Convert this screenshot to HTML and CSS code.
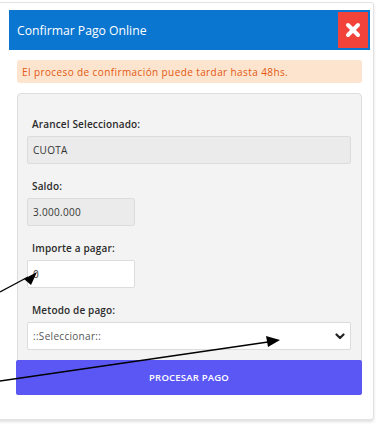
FILE: index.html
```html
<!DOCTYPE html>
<html lang="es">
<head>
<meta charset="utf-8">
<link rel="stylesheet" href="styles.css">
</head>
<body>
<div class="card">
  <div class="modal-header">
    <span class="title">Confirmar Pago Online</span>
    <button class="close" type="button" aria-label="Cerrar">
      <svg width="16" height="16" viewBox="0 0 16 16"><path d="M3 3 L13 13 M13 3 L3 13" stroke="#fff" stroke-width="4" stroke-linecap="round"/></svg>
    </button>
  </div>
  <div class="modal-body">
    <div class="alert">El proceso de confirmación puede tardar hasta 48hs.</div>
    <div class="panel">
      <div class="group">
        <label class="label">Arancel Seleccionado:</label>
        <div class="field readonly wide">CUOTA</div>
      </div>
      <div class="group">
        <label class="label">Saldo:</label>
        <div class="field readonly short">3.000.000</div>
      </div>
      <div class="group">
        <label class="label">Importe a pagar:</label>
        <div class="field short">0</div>
      </div>
      <div class="group">
        <label class="label">Metodo de pago:</label>
        <div class="field wide select">
          <span class="placeholder">::Seleccionar::</span>
          <svg class="chev" width="10" height="7" viewBox="0 0 10 7"><path d="M1.5 1.5 L5 5 L8.5 1.5" fill="none" stroke="#222" stroke-width="2.2" stroke-linecap="round" stroke-linejoin="round"/></svg>
        </div>
      </div>
    </div>
    <button class="submit" type="button">PROCESAR PAGO</button>
  </div>
</div>
<svg class="arrows" width="377" height="424" viewBox="0 0 377 424">
  <line x1="0" y1="292" x2="28" y2="277" stroke="#000" stroke-width="1.3"/>
  <polygon points="37,272 24,279 31,285" fill="#000"/>
  <line x1="0" y1="381" x2="268" y2="342" stroke="#000" stroke-width="1.3"/>
  <polygon points="280,340 266,336 268,347" fill="#000"/>
</svg>
</body>
</html>
```
FILE: styles.css
```css
* { box-sizing: border-box; }
html, body { margin: 0; padding: 0; background: #fff; }
body {
  font-family: "Open Sans", "Noto Sans", sans-serif;
  color: #333;
  position: relative;
  width: 377px;
  height: 424px;
  overflow: hidden;
}
.card {
  margin: 2px 3px 0 -3px;
  padding: 7px 3px 24px 11px;
  border: 1px solid #e2e2e2;
  border-radius: 3px;
  box-shadow: 0 2px 3px rgba(0,0,0,0.12);
  background: #fff;
}
.modal-header {
  height: 40px;
  background: #0b76d0;
  display: flex;
  align-items: center;
  justify-content: space-between;
  padding: 0 2px 0 8px;
}
.title {
  color: #fff;
  font-size: 12.2px;
  font-weight: 500;
}
.close {
  width: 30px;
  height: 36px;
  border: 0;
  padding: 0;
  background: #f2433a;
  display: flex;
  align-items: center;
  justify-content: center;
}
.modal-body {
  padding: 10px 8px 0 8px;
}
.alert {
  height: 23px;
  background: #fde4cf;
  border-radius: 3px;
  color: #e2590f;
  font-size: 10px;
  font-weight: 500;
  letter-spacing: 0.4px;
  display: flex;
  align-items: center;
  padding-left: 5px;
}
.panel {
  margin-top: 10px;
  background: #f3f3f3;
  border: 1px solid #dddddd;
  border-radius: 4px 4px 0 0;
  padding: 23px 9px 10px 9px;
  display: flex;
  flex-direction: column;
  gap: 15px;
}
.group {
  display: flex;
  flex-direction: column;
  gap: 5px;
}
.label {
  font-size: 10px;
  line-height: 14px;
  font-weight: 600;
  letter-spacing: 0.15px;
  color: #2b2b2b;
  padding-left: 5px;
}
.field {
  height: 28px;
  border: 1px solid #dcdcdc;
  border-radius: 2px;
  background: #fff;
  font-size: 10px;
  letter-spacing: 0.3px;
  color: #333;
  display: flex;
  align-items: center;
  padding-left: 5px;
}
.readonly { background: #ebebeb; }
.wide { width: 324px; }
.short { width: 108px; }
.select {
  justify-content: space-between;
  padding-right: 5px;
}
.placeholder { color: #555; }
.submit {
  display: block;
  width: 346px;
  height: 35px;
  margin: -1px 0 0 -1px;
  border: 0;
  border-radius: 2px;
  background: #5a57f5;
  color: #fff;
  font-family: inherit;
  font-size: 9.5px;
  font-weight: 600;
  letter-spacing: 0.2px;
  position: relative;
}
.arrows {
  position: absolute;
  left: 0;
  top: 0;
  pointer-events: none;
}
```
